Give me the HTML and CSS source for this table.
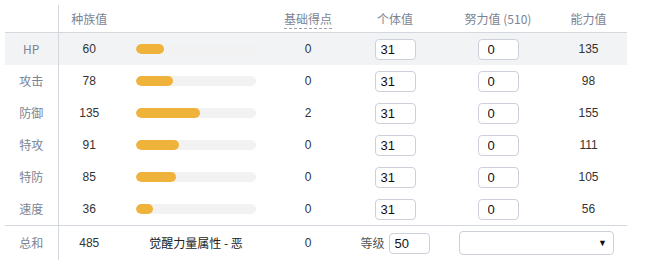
FILE: index.html
```html
<!DOCTYPE html>
<html lang="zh">
<head>
<meta charset="utf-8">
<link rel="stylesheet" href="styles.css">
</head>
<body>
<table class="stats">
  <colgroup>
    <col class="c-label"><col class="c-base"><col class="c-bar"><col class="c-pt"><col class="c-iv"><col class="c-ev"><col class="c-val">
  </colgroup>
  <thead>
    <tr>
      <th class="label"></th>
      <th>种族值</th>
      <th></th>
      <th><span class="dashed">基础得点</span></th>
      <th>个体值</th>
      <th>努力值 (510)</th>
      <th>能力值</th>
    </tr>
  </thead>
  <tbody>
    <tr class="hl">
      <td class="label">HP</td><td>60</td>
      <td class="barcell"><div class="track"><div class="fill" style="width:28px"></div></div></td>
      <td>0</td><td><input class="num" value="31"></td><td><input class="num ev" value="0"></td><td class="val">135</td>
    </tr>
    <tr>
      <td class="label">攻击</td><td>78</td>
      <td class="barcell"><div class="track"><div class="fill" style="width:37px"></div></div></td>
      <td>0</td><td><input class="num" value="31"></td><td><input class="num ev" value="0"></td><td class="val">98</td>
    </tr>
    <tr>
      <td class="label">防御</td><td>135</td>
      <td class="barcell"><div class="track"><div class="fill" style="width:64px"></div></div></td>
      <td>2</td><td><input class="num" value="31"></td><td><input class="num ev" value="0"></td><td class="val">155</td>
    </tr>
    <tr>
      <td class="label">特攻</td><td>91</td>
      <td class="barcell"><div class="track"><div class="fill" style="width:43px"></div></div></td>
      <td>0</td><td><input class="num" value="31"></td><td><input class="num ev" value="0"></td><td class="val">111</td>
    </tr>
    <tr>
      <td class="label">特防</td><td>85</td>
      <td class="barcell"><div class="track"><div class="fill" style="width:40px"></div></div></td>
      <td>0</td><td><input class="num" value="31"></td><td><input class="num ev" value="0"></td><td class="val">105</td>
    </tr>
    <tr>
      <td class="label">速度</td><td>36</td>
      <td class="barcell"><div class="track"><div class="fill" style="width:17px"></div></div></td>
      <td>0</td><td><input class="num" value="31"></td><td><input class="num ev" value="0"></td><td class="val">56</td>
    </tr>
  </tbody>
  <tfoot>
    <tr>
      <td class="label">总和</td><td>485</td>
      <td class="hidden-power">觉醒力量属性 - 恶</td>
      <td>0</td>
      <td><span class="level">等级 <input class="num" value="50"></span></td>
      <td colspan="2"><div class="select"><span class="arrow">▼</span></div></td>
    </tr>
  </tfoot>
</table>
</body>
</html>
```

FILE: styles.css
```css
html, body {
  margin: 0;
  padding: 0;
  background: #ffffff;
}
body {
  padding: 5px 0 0 5px;
  font-family: "Liberation Sans", "Noto Sans CJK SC", sans-serif;
  font-size: 12px;
  color: #333333;
}
.stats {
  border-collapse: collapse;
  table-layout: fixed;
  width: 622px;
}
.c-label { width: 53px; }
.c-base { width: 62px; }
.c-bar { width: 152px; }
.c-pt { width: 72px; }
.c-iv { width: 102px; }
.c-ev { width: 104px; }
.c-val { width: 77px; }

.stats th, .stats td {
  padding: 0;
  text-align: center;
  vertical-align: middle;
  line-height: 16px;
}
.stats th {
  height: 27px;
  font-weight: normal;
  color: #7b8494;
  font-family: "Noto Sans CJK SC", "Liberation Sans", sans-serif;
  font-size: 12px;
  border-bottom: 1px solid #d3d7de;
  line-height: 14px;
}
.dashed {
  border-bottom: 1px dashed #9aa0aa;
  padding-bottom: 1px;
}
.stats .label {
  border-right: 1px solid #d3d7de;
  color: #7b8494;
  font-family: "Noto Sans CJK SC", "Liberation Sans", sans-serif;
}
.stats tbody tr {
  height: 32px;
}
.stats tbody td {
  height: 32px;
}
.stats tbody tr.hl td {
  background: #f2f3f5;
}
.barcell {
  text-align: left !important;
}
.track {
  margin-left: 16px;
  width: 120px;
  height: 10px;
  border-radius: 5px;
  background: #f2f2f2;
  overflow: hidden;
}
.fill {
  height: 10px;
  border-radius: 5px;
  background: #efb33b;
}
.num {
  box-sizing: border-box;
  width: 41px;
  height: 21px;
  border: 1px solid #ccd0d8;
  border-radius: 4px;
  padding: 0 5px;
  margin: 0;
  font-family: "Liberation Sans", sans-serif;
  font-size: 13px;
  line-height: 19px;
  color: #111111;
  background: #ffffff;
  vertical-align: middle;
}
.num.ev {
  padding-left: 9px;
}
.val {
  color: #333333;
}
.stats tfoot td {
  height: 34px;
  border-top: 1px solid #d3d7de;
}
.stats tfoot td.label {
  border-right: 1px solid #d3d7de;
}
.hidden-power {
  font-family: "Noto Sans CJK SC", "Liberation Sans", sans-serif;
  color: #222222;
}
.level {
  display: inline-flex;
  align-items: center;
  gap: 4px;
  font-family: "Noto Sans CJK SC", sans-serif;
  color: #555555;
}
.select {
  box-sizing: border-box;
  width: 155px;
  height: 24px;
  margin: 0 auto;
  border: 1px solid #ccd0d8;
  border-radius: 4px;
  display: flex;
  align-items: center;
  justify-content: flex-end;
  padding-right: 6px;
}
.arrow {
  font-size: 9px;
  color: #111111;
}
```
